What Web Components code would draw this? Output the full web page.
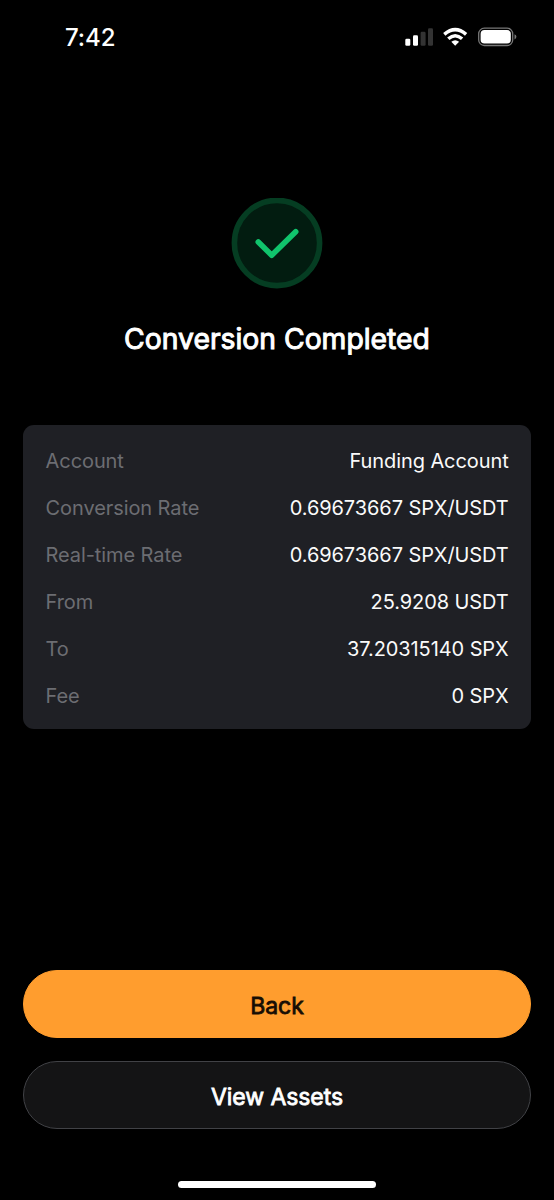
<!DOCTYPE html>
<html lang="en">
<head>
<meta charset="utf-8">
<meta name="viewport" content="width=device-width, initial-scale=1">
<title>Conversion Completed</title>
<style>
html, body { margin: 0; background: #000; }
body { font-family: Inter, "Liberation Sans", sans-serif; color: #fff; }
</style>
</head>
<body>
<conversion-screen></conversion-screen>
<script>
const define = (name, html) => {
  const template = document.createElement('template');
  template.innerHTML = html;
  customElements.define(name, class extends HTMLElement {
    constructor() {
      super();
      this.attachShadow({ mode: 'open' }).append(template.content.cloneNode(true));
    }
  });
};

define('status-bar', `
<style>
:host { display: flex; justify-content: space-between; align-items: center; box-sizing: border-box; height: 74px; padding: 0 37px 0 65px; }
time { padding-top: 2px; font-size: 24px; line-height: 30px; font-weight: 500; letter-spacing: -0.1px; }
svg { display: block; }
</style>
<time>7:42</time>
<svg width="112" height="24" viewBox="405 25 112 24">
  <g fill="#fff">
    <rect x="405.3" y="38.7" width="5" height="7" rx="1.3"/>
    <rect x="413" y="35.3" width="5" height="10.4" rx="1.3"/>
    <rect x="420.6" y="31.8" width="5" height="13.9" rx="1.3" fill="#333"/>
    <rect x="428" y="28.2" width="5" height="17.5" rx="1.3" fill="#333"/>
  </g>
  <g fill="none" stroke="#fff" stroke-width="3.5">
    <path d="M444.3 34.3Q455.2 25 466.1 34.3"/>
    <path d="M448.3 38.7Q455.2 32.7 462.1 38.7"/>
  </g>
  <path d="M451.3 41.7Q455.2 38.6 459.1 41.7L455.2 45.7Z" fill="#fff"/>
  <rect x="478.7" y="28.2" width="34" height="17.3" rx="5.6" fill="none" stroke="#777" stroke-width="1.3"/>
  <rect x="480.6" y="30.1" width="30.2" height="13.5" rx="3.8" fill="#fff"/>
  <path d="M514.5 34.2Q516.4 35 516.4 36.8T514.5 39.4Z" fill="#777"/>
</svg>`);

define('success-badge', `
<style>
:host { display: block; width: 92px; height: 91px; }
svg { display: block; }
</style>
<svg width="92" height="91" viewBox="0 0 92 91">
  <circle cx="46" cy="45" r="42.6" fill="#021c10" stroke="#053d22" stroke-width="5.6"/>
  <path d="M27.3 43.9L40.7 57.2L64.7 33.7" fill="none" stroke="#10c46c" stroke-width="5.6" stroke-linecap="round" stroke-linejoin="round"/>
</svg>`);

define('detail-card', `
<style>
:host { display: flex; flex-direction: column; box-sizing: border-box; height: 304px; padding: 12px 22.4px 10px 22.6px; border-radius: 11px; background: #1f2025; }
</style>
<slot></slot>`);

define('detail-row', `
<style>
:host { display: flex; justify-content: space-between; align-items: center; height: 47px; font-size: 20px; line-height: 28px; letter-spacing: -0.09px; }
.label { color: #6c6d72; }
.value { color: #fafafa; }
</style>
<span class="label"><slot name="label"></slot></span>
<span class="value"><slot></slot></span>`);

define('pill-button', `
<style>
:host { display: block; }
button { display: flex; align-items: center; justify-content: center; box-sizing: border-box; width: 100%; height: 68px; margin: 0; padding: 3px 0 0; border: 1px solid #414246; border-radius: 34px; background: #141415; color: #fff; font: 400 23px/30px Inter, "Liberation Sans", sans-serif; letter-spacing: -0.06px; -webkit-text-stroke: 0.8px currentColor; }
:host([primary]) button { border-color: #ff9d2e; background: #ff9d2e; color: #160d04; }
</style>
<button type="button"><slot></slot></button>`);

define('home-indicator', `
<style>
:host { display: block; width: 198px; height: 7px; border-radius: 4px; background: #fff; }
</style>`);

define('conversion-screen', `
<style>
:host { display: flex; flex-direction: column; box-sizing: border-box; height: 1200px; background: #000; }
main { display: flex; flex-direction: column; flex: 1; padding: 124px 23px 0; }
success-badge { align-self: center; }
h1 { margin: 30px 0 0; text-align: center; font-size: 28.3px; line-height: 40px; font-weight: 400; -webkit-text-stroke: 1px currentColor; }
detail-card { margin-top: 66px; }
.actions { display: grid; gap: 23px; padding: 0 23px; }
home-indicator { align-self: center; margin: 52px 0 12px; }
</style>
<status-bar></status-bar>
<main>
  <success-badge></success-badge>
  <h1>Conversion Completed</h1>
  <detail-card>
    <detail-row><span slot="label">Account</span>Funding Account</detail-row>
    <detail-row><span slot="label">Conversion Rate</span>0.69673667 SPX/USDT</detail-row>
    <detail-row><span slot="label">Real-time Rate</span>0.69673667 SPX/USDT</detail-row>
    <detail-row><span slot="label">From</span>25.9208 USDT</detail-row>
    <detail-row><span slot="label">To</span>37.20315140 SPX</detail-row>
    <detail-row><span slot="label">Fee</span>0 SPX</detail-row>
  </detail-card>
</main>
<div class="actions">
  <pill-button primary>Back</pill-button>
  <pill-button>View Assets</pill-button>
</div>
<home-indicator></home-indicator>`);
</script>
</body>
</html>
